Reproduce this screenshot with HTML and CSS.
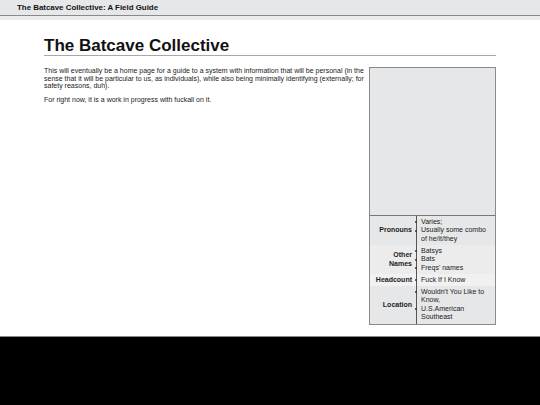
FILE: index.html
```html
<!DOCTYPE html>
<html>
<head>
<meta charset="utf-8">
<link rel="stylesheet" href="styles.css">
</head>
<body>
<div class="topwrap">
  <header class="topbar">The Batcave Collective: A Field Guide</header>
</div>
<main class="page">
  <h1 class="title">The Batcave Collective</h1>
  <div class="content">
    <aside class="infobox">
      <div class="infobox-image"></div>
      <div class="row">
        <div class="label">Pronouns</div>
        <ul class="values">
          <li>Varies;</li>
          <li>Usually some combo of he/it/they</li>
        </ul>
      </div>
      <div class="row alt">
        <div class="label">Other<br>Names</div>
        <ul class="values">
          <li>Batsys</li>
          <li>Bats</li>
          <li>Freqs' names</li>
        </ul>
      </div>
      <div class="row light">
        <div class="label">Headcount</div>
        <ul class="values">
          <li>Fuck If I Know</li>
        </ul>
      </div>
      <div class="row">
        <div class="label">Location</div>
        <ul class="values">
          <li>Wouldn't You Like to Know,</li>
          <li>U.S.American Southeast</li>
        </ul>
      </div>
    </aside>
    <p>This will eventually be a home page for a guide to a system with information that will be personal (in the sense that it will be particular to us, as individuals), while also being minimally identifying (externally; for safety reasons, duh).</p>
    <p>For right now, it is a work in progress with fuckall on it.</p>
  </div>
</main>
</body>
</html>
```
FILE: styles.css
```css
html, body {
  margin: 0;
  padding: 0;
  background: #000;
  font-family: "Liberation Sans", Arial, sans-serif;
  color: #111;
}
.topwrap {
  background: #ececee;
  padding-bottom: 4px;
}
.topbar {
  height: 16px;
  box-sizing: border-box;
  background: #e6e7e9;
  border-bottom: 1px solid #8a8a8a;
  font-size: 7.9px;
  font-weight: bold;
  line-height: 16px;
  padding-left: 17px;
}
.page {
  background: #fff;
  height: 317px;
  box-sizing: border-box;
  border-bottom: 1px solid #8a8a8a;
  padding: 16px 44px 0 44px;
}
.title {
  margin: 0;
  font-size: 17px;
  font-weight: bold;
  line-height: 19px;
  padding-bottom: 0;
  border-bottom: 1px solid #a8a8a8;
}
.content {
  margin-top: 11px;
}
.content p {
  margin: 0 0 6px 0;
  font-size: 7px;
  line-height: 7.6px;
  color: #1a1a1a;
}
.infobox {
  float: right;
  width: 127px;
  box-sizing: border-box;
  border: 1px solid #8a8a8a;
  background: #e6e7e9;
  margin-left: 4px;
  font-size: 7px;
  line-height: 8.5px;
  color: #222;
}
.infobox-image {
  height: 147px;
  border-bottom: 1.5px solid #777;
}
.row {
  display: flex;
  align-items: stretch;
}
.row.alt { background: #ececed; }
.row.light { background: #f1f1f2; }
.label {
  width: 44px;
  flex: none;
  display: flex;
  align-items: center;
  justify-content: flex-end;
  text-align: right;
  font-weight: bold;
  padding-right: 2px;
  box-sizing: border-box;
}
.values {
  list-style: none;
  margin: 0;
  padding: 1.75px 3px 1.75px 4px;
  border-left: 1px solid #555;
  margin-left: 2px;
  flex: 1;
}
.values li {
  position: relative;
}
.values li::before {
  content: "";
  position: absolute;
  left: -6.5px;
  top: 3.25px;
  width: 2px;
  height: 2px;
  border-radius: 50%;
  background: #333;
}
```
